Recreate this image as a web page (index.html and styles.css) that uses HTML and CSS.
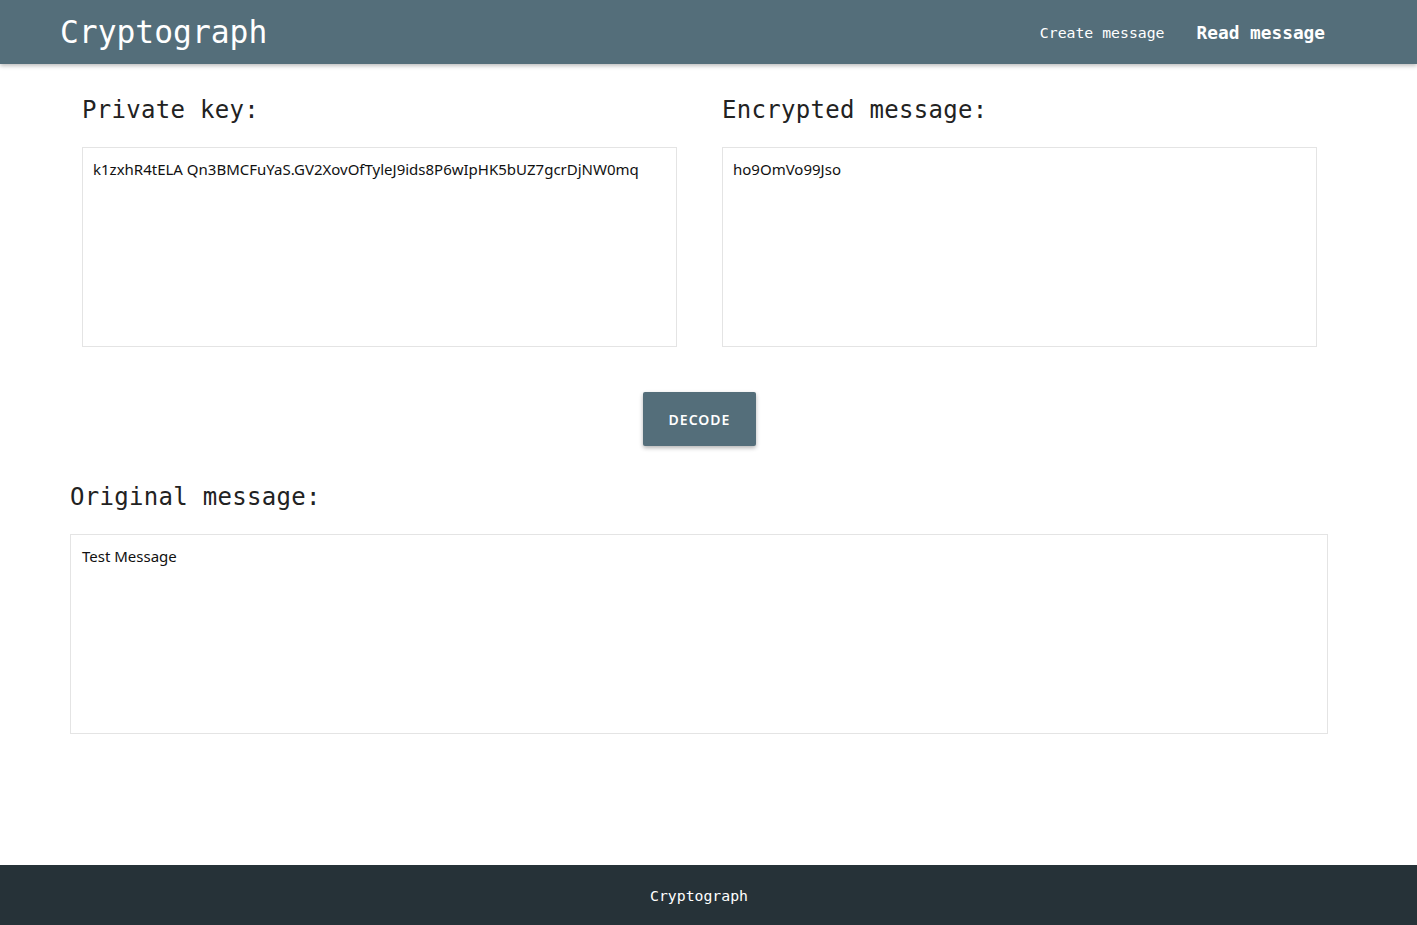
FILE: index.html
```html
<!DOCTYPE html>
<html>
<head>
<meta charset="utf-8">
<title>Cryptograph</title>
<link rel="stylesheet" href="styles.css">
</head>
<body>
<div class="page">
  <header class="topbar">
    <div class="brand">Cryptograph</div>
    <nav class="nav">
      <a class="nav-link">Create message</a>
      <a class="nav-link active">Read message</a>
    </nav>
  </header>
  <main class="main">
    <div class="row">
      <section class="col">
        <h2 class="label">Private key:</h2>
        <textarea class="box" readonly>k1zxhR4tELA Qn3BMCFuYaS.GV2XovOfTyleJ9ids8P6wIpHK5bUZ7gcrDjNW0mq</textarea>
      </section>
      <section class="col">
        <h2 class="label">Encrypted message:</h2>
        <textarea class="box" readonly>ho9OmVo99Jso</textarea>
      </section>
    </div>
    <div class="actions">
      <button class="btn">DECODE</button>
    </div>
    <section class="result">
      <h2 class="label">Original message:</h2>
      <textarea class="box wide" readonly>Test Message</textarea>
    </section>
  </main>
  <footer class="footer">Cryptograph</footer>
</div>
</body>
</html>
```
FILE: styles.css
```css
* { box-sizing: border-box; }
html, body { margin: 0; padding: 0; background: #fff; }
body { font-family: "DejaVu Sans Mono", "Liberation Mono", monospace; }
.page { min-height: 925px; display: flex; flex-direction: column; }
.topbar {
  height: 64px;
  background: #546e7a;
  display: flex;
  align-items: center;
  justify-content: space-between;
  padding: 0 92px 0 60px;
  box-shadow: 0 2px 4px rgba(0,0,0,0.25);
  position: relative;
  z-index: 1;
}
.brand { color: #fff; font-size: 31.3px; letter-spacing: 0; }
.nav { display: flex; align-items: center; gap: 32px; }
.nav-link { color: #fff; font-size: 14.8px; cursor: pointer; }
.nav-link.active { font-size: 17.8px; font-weight: bold; }
.main { flex: 1; padding: 0 89px 0 70px; }
.row { display: flex; gap: 45px; padding: 0 11px 0 12px; }
.col { flex: 1; }
.label {
  margin: 0;
  font-weight: normal;
  font-size: 24px;
  letter-spacing: 0.3px;
  color: #222;
  height: 83px;
  line-height: 24px;
  padding-top: 34px;
}
.box {
  display: block;
  width: 100%;
  height: 200px;
  border: 1px solid #e4e4e4;
  resize: none;
  padding: 11px 10px;
  font-family: "Noto Sans", "Open Sans", sans-serif;
  font-size: 15px;
  line-height: 20px;
  color: #111;
  outline: none;
  background: #fff;
}
.box.wide { padding-left: 11px; }
.actions { display: flex; justify-content: center; padding: 45px 0 0 0; }
.btn {
  width: 113px;
  height: 54px;
  background: #546e7a;
  color: #fff;
  border: none;
  border-radius: 2px;
  font-family: "Noto Sans", "Open Sans", sans-serif;
  font-size: 14px;
  font-weight: 600;
  letter-spacing: 1px;
  box-shadow: 0 2px 4px rgba(0,0,0,0.3);
  margin-left: 1px;
}
.result { padding-top: 5px; }
.footer {
  height: 60px;
  background: #263238;
  color: #fff;
  display: flex;
  align-items: center;
  justify-content: center;
  font-size: 14.8px;
  padding-right: 19px;
}
```
